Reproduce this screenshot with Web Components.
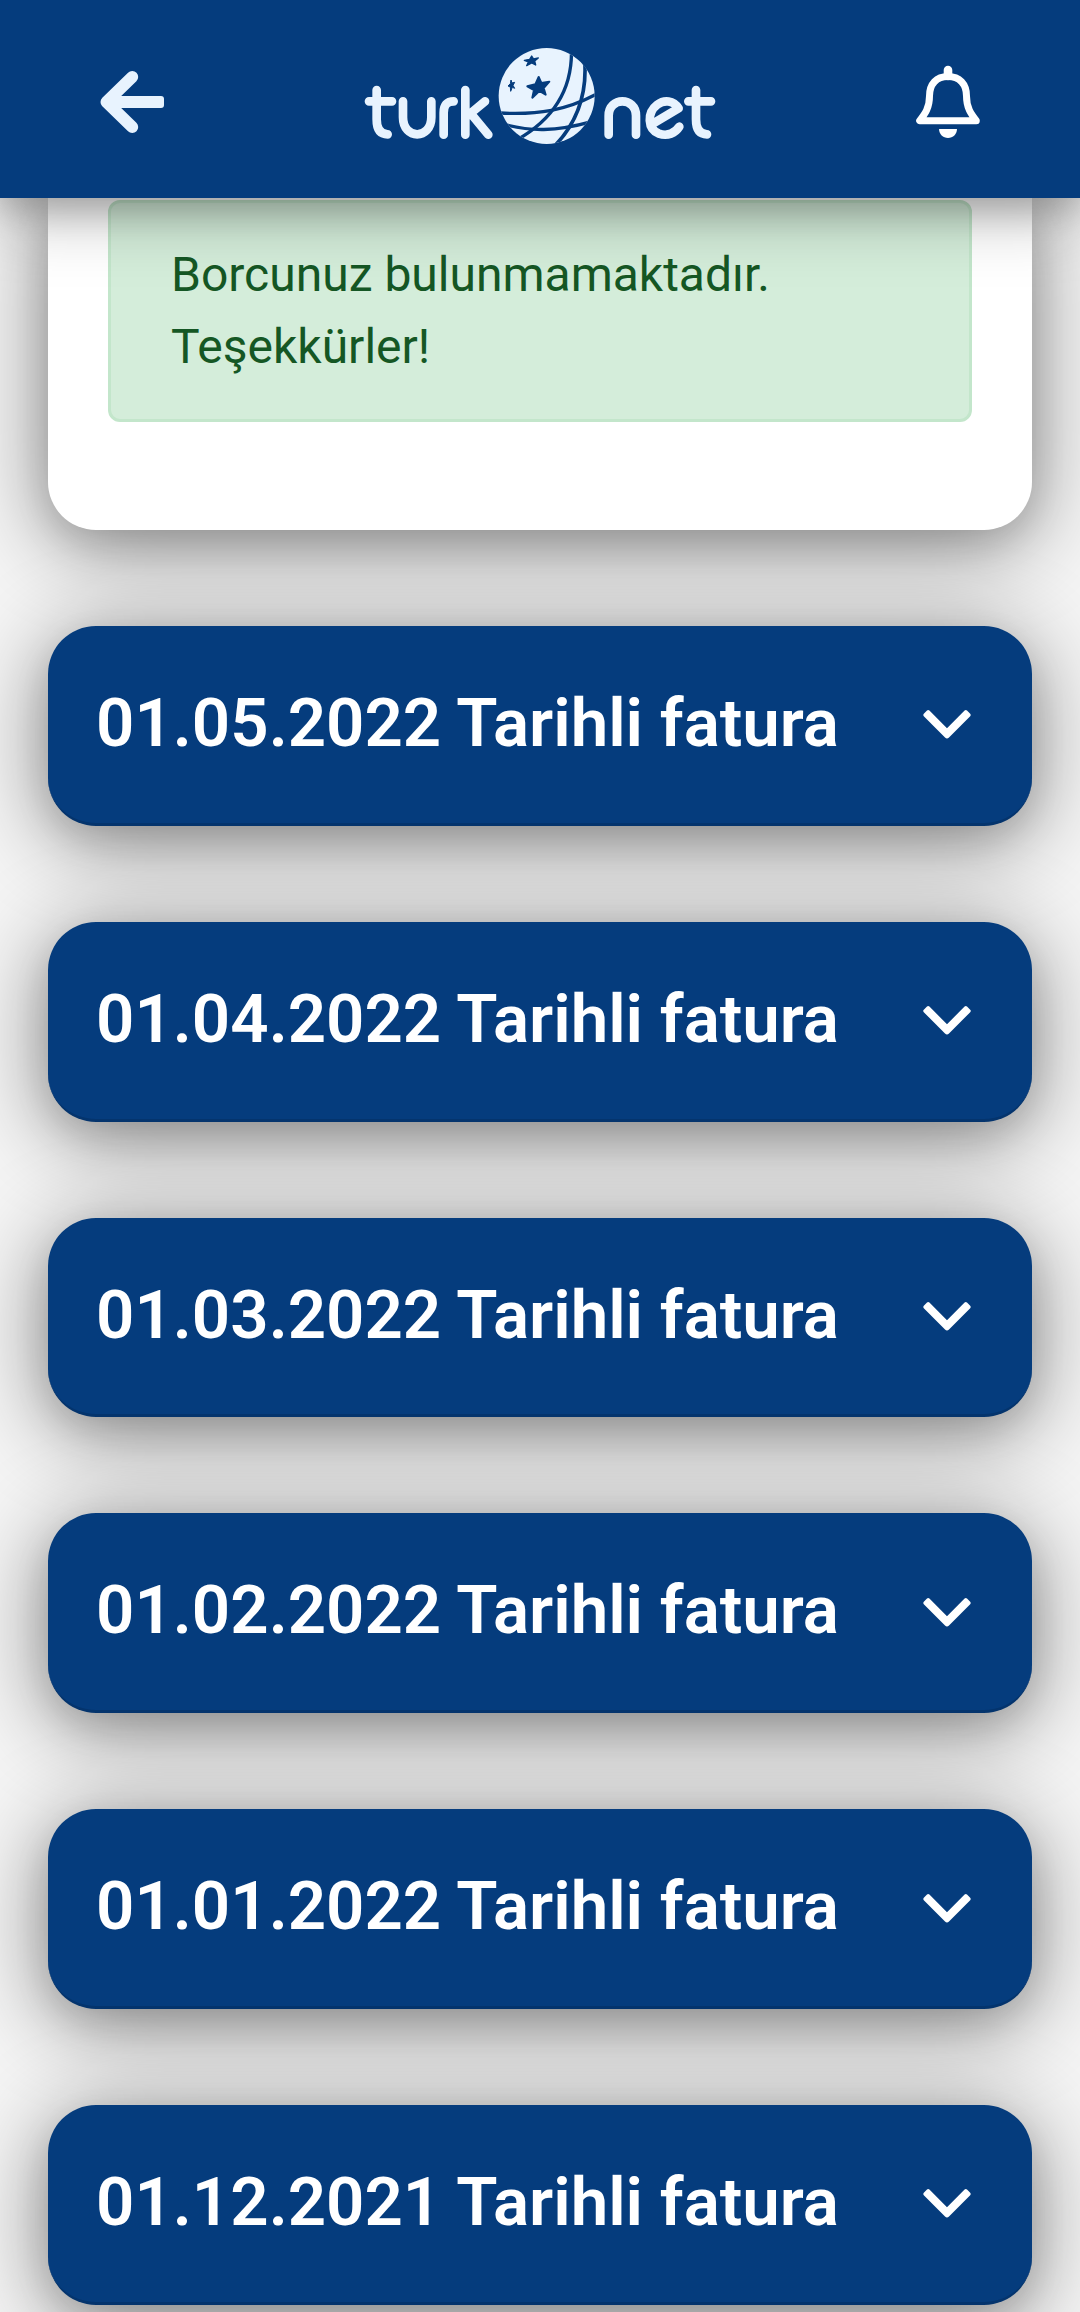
<!DOCTYPE html>
<html lang="tr">
<head>
<meta charset="utf-8">
<title>Faturalar</title>
<style>
html,body{margin:0;background:#f5f5f5}
body{font-family:Roboto,"Liberation Sans",sans-serif}
</style>
</head>
<body>
<tn-app></tn-app>
<script>
const define=(name,html)=>customElements.define(name,class extends HTMLElement{
  constructor(){
    super();
    const t=document.createElement('template');
    t.innerHTML=html;
    this.attachShadow({mode:'open'}).append(t.content.cloneNode(true));
  }
});

define('tn-back-icon',`<style>:host{display:block;width:100px;height:100px}svg{display:block}</style>
<svg width="100" height="100" viewBox="0 0 100 100"><path d="M52.200 27L26.500 52L52.200 77" fill="none" stroke="#e8f3fe" stroke-width="12" stroke-linecap="round" stroke-linejoin="round"/><rect x="30" y="46" width="54" height="12" rx="3" fill="#e8f3fe"/></svg>`);

define('tn-bell-icon',`<style>:host{display:block;width:100px;height:100px}svg{display:block}</style>
<svg width="100" height="100" viewBox="0 0 100 100"><path d="M48 26.500C36.500 26.500 29.500 34 29.500 46C29.500 58 25 64 19.700 70.700H76.300C71 64 66.500 58 66.500 46C66.500 34 59.500 26.500 48 26.500Z" fill="none" stroke="#fff" stroke-width="7" stroke-linejoin="round"/><path d="M48 20V26" stroke="#fff" stroke-width="8.600" stroke-linecap="round"/><path d="M39 79H57C57 84 53 88 48 88S39 84 39 79Z" fill="#fff"/></svg>`);

define('tn-logo',`<style>:host{display:block;width:380px;height:130px}svg{display:block}</style>
<svg width="380" height="130" viewBox="0 0 1140 390" role="img" aria-label="turknet">
<defs><clipPath id="globe"><circle cx="590" cy="198" r="144"/></clipPath></defs>
<g fill="none" stroke="#e8f3fe" stroke-width="26" stroke-linecap="round" stroke-linejoin="round">
<path d="M80 180V268Q80 313 113 313M57 214H126"/>
<path d="M159 214V262C159 330 244 330 244 262V214"/>
<path d="M281 314V248Q281 214 311 214"/>
<path d="M346 180V314M405 214L352 258M363 251L415 314"/>
<path d="M776 314V257C776 200 858 200 858 257V314"/>
<path d="M908 281L986 235C970 211 943 208 922 224C890 248 892 298 927 311C953 320 976 309 988 290"/>
<path d="M1038 180V268Q1038 313 1071 313M1015 214H1083"/>
</g>
<circle cx="590" cy="198" r="144" fill="#e8f3fe"/>
<g clip-path="url(#globe)">
<path d="M664 50C670 175 615 265 500 330" fill="none" stroke="#053c7d" stroke-width="10"/>
<path d="M704 90C712 195 680 280 612 350" fill="none" stroke="#053c7d" stroke-width="11"/>
<path d="M450 249C565 255 650 241 742 191" fill="none" stroke="#053c7d" stroke-width="10"/>
<path d="M462 283C540 304 615 306 725 275" fill="none" stroke="#053c7d" stroke-width="10"/>
<path d="M664 60L696 100L708 118L740 110L710 40Z" fill="#053c7d"/>
</g>
<g fill="#053c7d" stroke="#053c7d" stroke-linejoin="round">
<path stroke-width="6" d="M566 141L574 159L598 155L581 174L587 194L568 183L547 203L552 180L532 169L556 163Z"/>
<path stroke-width="4" d="M545 78L551 87L565 84L554 93L557 105L545 99L530 107L535 96L523 91L539 88Z"/>
<path stroke-width="3" d="M483 150L486 159L494 157L489 166L494 175L487 172L482 184L481 171L474 168L481 161Z"/>
</g>
</svg>`);

define('tn-header',`<style>
:host{display:flex;position:sticky;top:0;z-index:2;height:198px;box-sizing:border-box;padding:0 80px;align-items:flex-start;justify-content:space-between;background:#053c7d;box-shadow:0 12px 30px rgba(0,0,0,.19),0 18px 62px rgba(0,0,0,.27)}
tn-back-icon,tn-bell-icon{margin-top:50px}
tn-logo{margin-top:30px}
</style><tn-back-icon></tn-back-icon><tn-logo></tn-logo><tn-bell-icon></tn-bell-icon>`);

define('tn-alert',`<style>
:host{display:block;box-sizing:border-box;height:222px;padding:36px 60px;border:3px solid #c3e6cb;border-radius:12px;background:#d4edda;color:#155724;font-size:48px;line-height:72px}
</style><slot></slot>`);

define('tn-card',`<style>
:host{display:block;box-sizing:border-box;height:332px;padding:2px 60px 0;background:#fff;border-radius:0 0 48px 48px;box-shadow:0 14px 36px rgba(0,0,0,.1),0 13px 90px rgba(0,0,0,.48)}
</style><slot></slot>`);

define('tn-invoice',`<style>
:host{display:flex;box-sizing:border-box;height:199.8px;padding:0 59px 2px 48px;align-items:center;justify-content:space-between;background:#053c7d;border-bottom:3px solid #04346d;border-radius:48px;box-shadow:0 14px 36px rgba(0,0,0,.1),0 13px 90px rgba(0,0,0,.48);color:#fff;font-size:67.2px;font-weight:600;line-height:80px;white-space:nowrap}
span{margin-bottom:.6px}
svg{display:block;margin-top:2px}
</style><span><slot></slot></span>
<svg width="52" height="32" viewBox="0 0 52 32"><path d="M26 30.500Q25 30.500 24 29.500L2.800 8.200Q1.600 7 2.800 5.800L6 2.600Q7.200 1.400 8.400 2.600L26 20.200L43.600 2.600Q44.800 1.400 46 2.600L49.200 5.800Q50.400 7 49.200 8.200L28 29.500Q27 30.500 26 30.500Z" fill="#fff"/></svg>`);

define('tn-app',`<style>
:host{display:block;height:2312px;overflow:hidden;background:#f5f5f5}
main{display:flex;flex-direction:column;gap:96px;padding:0 48px}
</style>
<tn-header></tn-header>
<main>
<tn-card><tn-alert>Borcunuz bulunmamaktadır. Teşekkürler!</tn-alert></tn-card>
<tn-invoice>01.05.2022 Tarihli fatura</tn-invoice>
<tn-invoice>01.04.2022 Tarihli fatura</tn-invoice>
<tn-invoice>01.03.2022 Tarihli fatura</tn-invoice>
<tn-invoice>01.02.2022 Tarihli fatura</tn-invoice>
<tn-invoice>01.01.2022 Tarihli fatura</tn-invoice>
<tn-invoice>01.12.2021 Tarihli fatura</tn-invoice>
</main>`);
</script>
</body>
</html>
